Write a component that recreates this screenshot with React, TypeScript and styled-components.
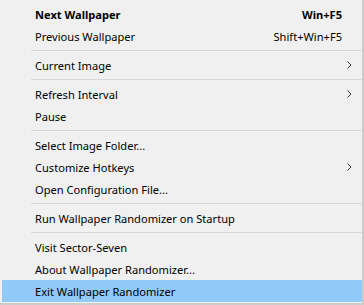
import React from 'react';
import styled, { createGlobalStyle } from 'styled-components';

const GlobalStyle = createGlobalStyle`
  html, body {
    margin: 0;
    padding: 0;
    background: #f0f0f0;
  }
`;

const Menu = styled.div`
  box-sizing: border-box;
  width: 364px;
  height: 305px;
  display: flex;
  flex-direction: column;
  padding: 3px 0 1px 2px;
  background: #f0f0f0;
  border-right: 2px solid #cccccc;
  border-bottom: 2px solid #cccccc;
  font-family: 'Noto Sans', 'Open Sans', sans-serif;
  font-size: 11.1px;
  color: #000;
`;

const Item = styled.div<{ $bold?: boolean; $active?: boolean }>`
  height: 22px;
  display: flex;
  align-items: center;
  padding: 0 10px 0 33px;
  font-weight: ${(p) => (p.$bold ? 700 : 400)};
  background: ${(p) => (p.$active ? '#91c9f7' : 'transparent')};
`;

const Label = styled.span`
  flex: 1;
  white-space: nowrap;
`;

const Shortcut = styled.span`
  white-space: nowrap;
  margin-right: 10px;
`;

const Separator = styled.div`
  height: 7px;
  display: flex;
  align-items: center;
  padding-left: 29px;

  &::after {
    content: '';
    flex: 1;
    height: 1px;
    background: #d7d7d7;
  }
`;

const Arrow = () => (
  <svg width="5" height="8" viewBox="0 0 5 8">
    <path d="M0.5 0.5 L4 4 L0.5 7.5" fill="none" stroke="#333" strokeWidth="1" />
  </svg>
);

type Entry =
  | { sep: true }
  | { label: string; shortcut?: string; sub?: boolean; bold?: boolean; active?: boolean };

const entries: Entry[] = [
  { label: 'Next Wallpaper', shortcut: 'Win+F5', bold: true },
  { label: 'Previous Wallpaper', shortcut: 'Shift+Win+F5' },
  { sep: true },
  { label: 'Current Image', sub: true },
  { sep: true },
  { label: 'Refresh Interval', sub: true },
  { label: 'Pause' },
  { sep: true },
  { label: 'Select Image Folder...' },
  { label: 'Customize Hotkeys', sub: true },
  { label: 'Open Configuration File...' },
  { sep: true },
  { label: 'Run Wallpaper Randomizer on Startup' },
  { sep: true },
  { label: 'Visit Sector-Seven' },
  { label: 'About Wallpaper Randomizer...' },
  { label: 'Exit Wallpaper Randomizer', active: true },
];

export default function App() {
  return (
    <>
      <GlobalStyle />
      <Menu>
        {entries.map((e, i) =>
          'sep' in e ? (
            <Separator key={i} />
          ) : (
            <Item key={i} $bold={e.bold} $active={e.active}>
              <Label>{e.label}</Label>
              {e.shortcut && <Shortcut>{e.shortcut}</Shortcut>}
              {e.sub && <Arrow />}
            </Item>
          )
        )}
      </Menu>
    </>
  );
}
